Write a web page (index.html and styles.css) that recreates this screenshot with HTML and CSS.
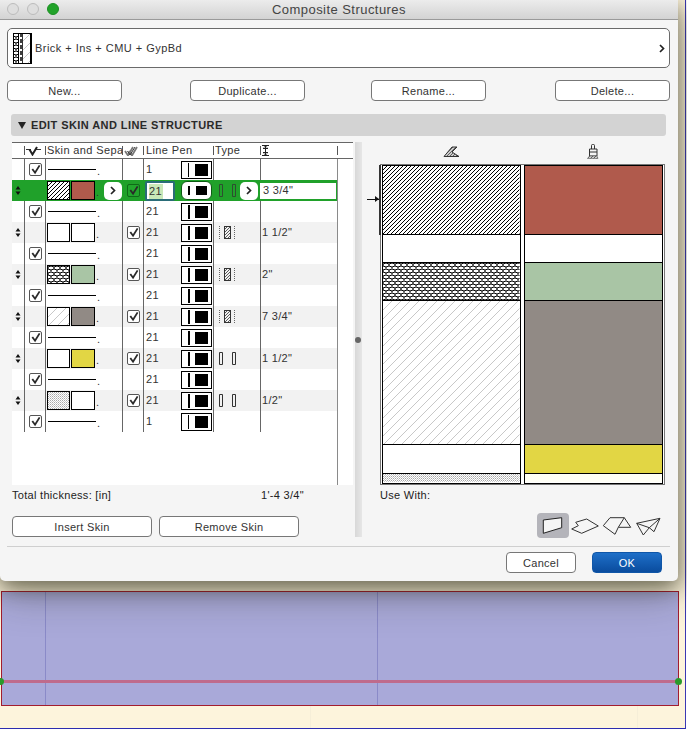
FILE: index.html
```html
<!DOCTYPE html>
<html lang="en">
<head>
<meta charset="utf-8">
<title>Composite Structures</title>
<link rel="stylesheet" href="styles.css">
</head>
<body>
<svg class="defs" aria-hidden="true">
  <defs>
    <pattern id="brick" width="4" height="4" patternUnits="userSpaceOnUse"><path d="M-1 1L1-1M0 4L4 0M3 5L5 3" stroke="#000" stroke-width="1"/></pattern>
    <pattern id="cmu" width="6" height="6" patternUnits="userSpaceOnUse"><path d="M3 0L6 1V3L3 4L0 3V1ZM3 4V6" fill="none" stroke="#000" stroke-width="1"/></pattern>
    <pattern id="conc" width="9" height="9" patternUnits="userSpaceOnUse"><path d="M-1 1L1-1M0 9L9 0M8 10L10 8" stroke="#c8c8c8" stroke-width="1"/></pattern>
    <pattern id="dots" width="2" height="2" patternUnits="userSpaceOnUse"><rect width="1" height="1" fill="#aaa"/><rect x="1" y="1" width="1" height="1" fill="#ccc"/></pattern>
    <pattern id="mini" width="3" height="3" patternUnits="userSpaceOnUse"><path d="M-1 1L1-1M0 3L3 0M2 4L4 2" stroke="#333" stroke-width=".8"/></pattern>
    <pattern id="surf" width="3" height="3" patternUnits="userSpaceOnUse"><rect width="3" height="3" fill="#ccc"/><path d="M0 3L3 0" stroke="#444" stroke-width=".8"/></pattern>
    <symbol id="check" viewBox="0 0 12 12"><path d="M2.500 5.500L5.500 9.500L10.500 1.500" fill="none" stroke="#2a2a2a" stroke-width="2"/></symbol>
    <symbol id="chev" viewBox="0 0 6 9"><path d="M1 1L4.500 4.500L1 8" fill="none" stroke="#222" stroke-width="1.700"/></symbol>
    <symbol id="sort" viewBox="0 0 6 9"><path d="M3 0L5.500 3.400H.5ZM3 9L.5 5.600H5.500Z" fill="#111"/></symbol>
    <symbol id="type-rects" viewBox="0 0 17 13"><path d="M.5.5H3.500V12.500H.5ZM13.500.5H16.500V12.500H13.500Z" fill="none" stroke="#333"/></symbol>
    <symbol id="type-core" viewBox="0 0 17 13"><rect x="5.500" y=".5" width="6" height="12" fill="url(#mini)" stroke="#333"/><path d="M.5 0V13M15.500 0V13" stroke="#666" stroke-dasharray="1 1"/></symbol>
  </defs>
</svg>

<div class="desk">
  <div class="plan">
    <i class="plan-v plan-v-a"></i>
    <i class="plan-v plan-v-b"></i>
    <i class="plan-axis"></i>
    <i class="plan-pin plan-pin-l"></i>
    <i class="plan-pin plan-pin-r"></i>
  </div>
</div>

<div class="dialog">
  <header class="titlebar">
    <span class="lights"><i class="light"></i><i class="light"></i><i class="light light-on"></i></span>
    <span class="title">Composite Structures</span>
  </header>

  <div class="picker">
    <svg class="picker-icon" viewBox="0 0 19 31">
      <rect width="19" height="31" fill="#fff"/>
      <rect width="1" height="31" fill="#000"/>
      <rect x="1" width="4" height="31" fill="url(#cmu)"/>
      <rect x="5" width="1" height="31" fill="#000"/>
      <path d="M8 0V31" stroke="#000" stroke-width="1.500" stroke-dasharray="4 2"/>
      <rect x="9" width="8" height="31" fill="url(#conc)"/>
      <rect x="9" width="1" height="31" fill="#333"/>
      <rect x="17" width="2" height="31" fill="#000"/>
      <path d="M0 .5H19M0 30.500H19" stroke="#000"/>
    </svg>
    <span class="picker-name">Brick + Ins + CMU + GypBd</span>
    <svg class="picker-chev"><use href="#chev"/></svg>
  </div>

  <div class="actions">
    <button class="btn btn-wide">New...</button>
    <button class="btn btn-wide">Duplicate...</button>
    <button class="btn btn-wide">Rename...</button>
    <button class="btn btn-wide">Delete...</button>
  </div>

  <div class="section"><i class="tri"></i>EDIT SKIN AND LINE STRUCTURE</div>

  <div class="main">
    <div class="left">
      <div class="table">
        <div class="row head">
          <span class="c"></span>
          <span class="c h-ico"><svg class="h-check" viewBox="0 0 15 10"><path d="M0 3.500H5M10 3.500H15" stroke="#333"/><path d="M3.500 3.500L6.500 8.500L11 1" fill="none" stroke="#222" stroke-width="2"/></svg></span>
          <span class="c">Skin and Sepa</span>
          <span class="c h-ico"><svg class="h-check2" viewBox="0 0 15 10"><path d="M1 5L4 9.500L9 1M5 5L8 9.500L13 1" fill="none" stroke="#777" stroke-width="1.800"/><path d="M3.500 5L6 9L11 1" fill="none" stroke="#333" stroke-width="1"/></svg></span>
          <span class="c">Line Pen</span>
          <span class="c">Type</span>
          <span class="c h-ico"><svg class="h-beam" viewBox="0 0 7 11"><path d="M0 .5H7M0 10.500H7M3.500 1V10M1 3.500H6M1 7.500H6M2 2.500L3.500 1L5 2.500M2 8.500L3.500 10L5 8.500" fill="none" stroke="#222"/></svg></span>
          <span class="c"></span>
        </div>

        <div class="rows">
        <div class="row">
          <span class="c"></span>
          <span class="c center"><span class="cb"><svg><use href="#check"/></svg></span></span>
          <span class="c line-cell"><i class="rule"></i><b class="dot">.</b></span>
          <span class="c"></span>
          <span class="c pen-cell"><span class="num">1</span><span class="pen pen-thin"><i></i><i></i></span></span>
          <span class="c"></span>
          <span class="c"></span>
        </div>

        <div class="row selected">
          <span class="c center"><svg class="sort"><use href="#sort"/></svg></span>
          <span class="c"></span>
          <span class="c skin-cell">
            <svg class="swatch"><rect width="100%" height="100%" fill="#fff"/><rect width="100%" height="100%" fill="url(#brick)"/></svg>
            <i class="swatch col-brick"></i><b class="dot">.</b>
            <span class="mini-btn mini-btn-a"><svg><use href="#chev"/></svg></span>
          </span>
          <span class="c center"><span class="cb cb-green"><svg><use href="#check"/></svg></span></span>
          <span class="c pen-cell"><span class="field"><em>21</em></span><span class="pen pen-round"><i></i><i></i></span></span>
          <span class="c type-cell"><svg class="type type-sel"><use href="#type-rects"/></svg><span class="mini-btn mini-btn-b"><svg><use href="#chev"/></svg></span></span>
          <span class="c thick-field">3 3/4"</span>
        </div>

        <div class="row">
          <span class="c"></span>
          <span class="c center"><span class="cb"><svg><use href="#check"/></svg></span></span>
          <span class="c line-cell"><i class="rule"></i><b class="dot">.</b></span>
          <span class="c"></span>
          <span class="c pen-cell"><span class="num">21</span><span class="pen"><i></i><i></i></span></span>
          <span class="c"></span>
          <span class="c"></span>
        </div>

        <div class="row skin">
          <span class="c center"><svg class="sort"><use href="#sort"/></svg></span>
          <span class="c"></span>
          <span class="c skin-cell"><i class="swatch"></i><i class="swatch"></i><b class="dot">.</b></span>
          <span class="c center"><span class="cb"><svg><use href="#check"/></svg></span></span>
          <span class="c pen-cell"><span class="num">21</span><span class="pen"><i></i><i></i></span></span>
          <span class="c type-cell"><svg class="type"><use href="#type-core"/></svg></span>
          <span class="c thick">1 1/2"</span>
        </div>

        <div class="row">
          <span class="c"></span>
          <span class="c center"><span class="cb"><svg><use href="#check"/></svg></span></span>
          <span class="c line-cell"><i class="rule"></i><b class="dot">.</b></span>
          <span class="c"></span>
          <span class="c pen-cell"><span class="num">21</span><span class="pen"><i></i><i></i></span></span>
          <span class="c"></span>
          <span class="c"></span>
        </div>

        <div class="row skin">
          <span class="c center"><svg class="sort"><use href="#sort"/></svg></span>
          <span class="c"></span>
          <span class="c skin-cell"><svg class="swatch"><rect width="100%" height="100%" fill="#fff"/><rect width="100%" height="100%" fill="url(#cmu)"/></svg><i class="swatch col-green"></i><b class="dot">.</b></span>
          <span class="c center"><span class="cb"><svg><use href="#check"/></svg></span></span>
          <span class="c pen-cell"><span class="num">21</span><span class="pen"><i></i><i></i></span></span>
          <span class="c type-cell"><svg class="type"><use href="#type-core"/></svg></span>
          <span class="c thick">2"</span>
        </div>

        <div class="row">
          <span class="c"></span>
          <span class="c center"><span class="cb"><svg><use href="#check"/></svg></span></span>
          <span class="c line-cell"><i class="rule"></i><b class="dot">.</b></span>
          <span class="c"></span>
          <span class="c pen-cell"><span class="num">21</span><span class="pen"><i></i><i></i></span></span>
          <span class="c"></span>
          <span class="c"></span>
        </div>

        <div class="row skin">
          <span class="c center"><svg class="sort"><use href="#sort"/></svg></span>
          <span class="c"></span>
          <span class="c skin-cell"><svg class="swatch"><rect width="100%" height="100%" fill="#fff"/><rect width="100%" height="100%" fill="url(#conc)"/></svg><i class="swatch col-grey"></i><b class="dot">.</b></span>
          <span class="c center"><span class="cb"><svg><use href="#check"/></svg></span></span>
          <span class="c pen-cell"><span class="num">21</span><span class="pen"><i></i><i></i></span></span>
          <span class="c type-cell"><svg class="type"><use href="#type-core"/></svg></span>
          <span class="c thick">7 3/4"</span>
        </div>

        <div class="row">
          <span class="c"></span>
          <span class="c center"><span class="cb"><svg><use href="#check"/></svg></span></span>
          <span class="c line-cell"><i class="rule"></i><b class="dot">.</b></span>
          <span class="c"></span>
          <span class="c pen-cell"><span class="num">21</span><span class="pen"><i></i><i></i></span></span>
          <span class="c"></span>
          <span class="c"></span>
        </div>

        <div class="row skin">
          <span class="c center"><svg class="sort"><use href="#sort"/></svg></span>
          <span class="c"></span>
          <span class="c skin-cell"><i class="swatch"></i><i class="swatch col-yellow"></i><b class="dot">.</b></span>
          <span class="c center"><span class="cb"><svg><use href="#check"/></svg></span></span>
          <span class="c pen-cell"><span class="num">21</span><span class="pen"><i></i><i></i></span></span>
          <span class="c type-cell"><svg class="type"><use href="#type-rects"/></svg></span>
          <span class="c thick">1 1/2"</span>
        </div>

        <div class="row">
          <span class="c"></span>
          <span class="c center"><span class="cb"><svg><use href="#check"/></svg></span></span>
          <span class="c line-cell"><i class="rule"></i><b class="dot">.</b></span>
          <span class="c"></span>
          <span class="c pen-cell"><span class="num">21</span><span class="pen"><i></i><i></i></span></span>
          <span class="c"></span>
          <span class="c"></span>
        </div>

        <div class="row skin">
          <span class="c center"><svg class="sort"><use href="#sort"/></svg></span>
          <span class="c"></span>
          <span class="c skin-cell"><svg class="swatch"><rect width="100%" height="100%" fill="#fff"/><rect width="100%" height="100%" fill="url(#dots)"/></svg><i class="swatch"></i><b class="dot">.</b></span>
          <span class="c center"><span class="cb"><svg><use href="#check"/></svg></span></span>
          <span class="c pen-cell"><span class="num">21</span><span class="pen"><i></i><i></i></span></span>
          <span class="c type-cell"><svg class="type"><use href="#type-rects"/></svg></span>
          <span class="c thick">1/2"</span>
        </div>

        <div class="row">
          <span class="c"></span>
          <span class="c center"><span class="cb"><svg><use href="#check"/></svg></span></span>
          <span class="c line-cell"><i class="rule"></i><b class="dot">.</b></span>
          <span class="c"></span>
          <span class="c pen-cell"><span class="num">1</span><span class="pen pen-thin"><i></i><i></i></span></span>
          <span class="c"></span>
          <span class="c"></span>
        </div>
        </div>
      </div>

      <div class="total"><span class="total-label">Total thickness: [in]</span><span>1'-4 3/4"</span></div>

      <div class="skin-actions">
        <button class="btn btn-skin">Insert Skin</button>
        <button class="btn btn-skin">Remove Skin</button>
      </div>
    </div>

    <div class="splitter"><i class="splitter-dot"></i></div>

    <div class="right">
      <div class="preview-head">
        <svg class="ico-surface" viewBox="0 0 18 12"><path d="M2 10.500L10 1H15L10 6L17 10.500Z" fill="url(#surf)" stroke="#333"/></svg>
        <svg class="ico-brush" viewBox="0 0 12 15"><path d="M4.500 5V1.500Q4.500 .5 5.500 .5H6.500Q7.500 .5 7.500 1.500V5M2.500 5H10V12H2.500Z" fill="#f5f5f5" stroke="#333"/><path d="M2.500 8H10" stroke="#333"/><path d="M2.500 12H10L11 14.500H.5Z" fill="url(#surf)" stroke="#555" stroke-width=".6"/></svg>
      </div>
      <div class="preview">
        <div class="pcol">
          <span class="pc pc-1"><svg class="pfill"><rect width="100%" height="100%" fill="url(#brick)"/></svg></span>
          <i class="pc pc-2"></i>
          <span class="pc pc-3"><svg class="pfill"><rect width="100%" height="100%" fill="url(#cmu)"/></svg></span>
          <span class="pc pc-4"><svg class="pfill"><rect width="100%" height="100%" fill="url(#conc)"/></svg></span>
          <i class="pc pc-5"></i>
          <span class="pc pc-6"><svg class="pfill"><rect width="100%" height="100%" fill="url(#dots)"/></svg></span>
        </div>
        <div class="pcol">
          <i class="pc pc-1 col-brick"></i>
          <i class="pc pc-2"></i>
          <i class="pc pc-3 col-green"></i>
          <i class="pc pc-4 col-grey"></i>
          <i class="pc pc-5 col-yellow"></i>
          <i class="pc pc-6 col-ivory"></i>
        </div>
        <span class="marker"><i class="marker-arrow"></i></span>
      </div>
      <div class="use-with">Use With:</div>
      <div class="geom">
        <span class="geom-item geom-on"><svg viewBox="0 0 32 25"><path d="M6.300 7L24.700 4.700V14.700L6.300 20.300Z" fill="#f5f5f5" stroke="#222"/></svg></span>
        <span class="geom-item"><svg viewBox="0 0 32 25"><path d="M2.700 16L9.300 12.700L6.700 9.300L17.700 6L29.300 13L12.700 20.300Z" fill="none" stroke="#333"/></svg></span>
        <span class="geom-item"><svg viewBox="0 0 32 25"><path d="M2.300 12.700L9 4.700H23.300L29.700 14.300H17.300L14 21.300ZM23.300 4.700L17.300 14.300" fill="none" stroke="#333"/></svg></span>
        <span class="geom-item"><svg viewBox="0 0 32 25"><path d="M3.700 10.300L27 5.300L21 18.700L16.300 14.700L10.300 22ZM27 5.300L16.300 14.700L3.700 10.300" fill="none" stroke="#333"/></svg></span>
      </div>
    </div>
  </div>

  <div class="divider"></div>

  <div class="footer">
    <button class="btn btn-foot">Cancel</button>
    <button class="btn btn-foot btn-ok">OK</button>
  </div>
</div>
</body>
</html>
```

FILE: styles.css
```css
* { box-sizing: border-box; }
html, body { margin: 0; padding: 0; }
body {
  position: relative;
  width: 687px;
  height: 729px;
  overflow: hidden;
  font-family: "Liberation Sans", Arial, sans-serif;
  font-size: 11px;
  letter-spacing: .3px;
  color: #333;
}
.defs { position: absolute; width: 0; height: 0; }
i, em, b { display: block; font-style: normal; font-weight: normal; }
button { font: inherit; letter-spacing: inherit; margin: 0; }

/* drawing behind the dialog */
.desk {
  width: 686px;
  height: 729px;
  padding: 591px 0 0 1px;
  background:
    linear-gradient(#f6eed8, #f6eed8) 310px 706px / 1px 23px no-repeat,
    linear-gradient(#f6eed8, #f6eed8) 637px 706px / 1px 23px no-repeat,
    #fdf4dc;
  border-right: 1px solid #3b38b4;
  border-bottom: 1px solid #2c2cb0;
}
.plan {
  position: relative;
  width: 678px;
  height: 115px;
  background: #a9a9d9;
  border: 1px solid #a31c2e;
}
.plan-v { position: absolute; top: 0; bottom: 0; width: 1px; background: #8a8ac8; }
.plan-v-a { left: 43px; }
.plan-v-b { left: 375px; }
.plan-axis { position: absolute; left: 0; right: 0; top: 88px; height: 3px; background: #bf6b8c; }
.plan-pin { position: absolute; top: 86px; width: 7px; height: 7px; border-radius: 50%; background: #2a9a2a; }
.plan-pin-l { left: -5px; }
.plan-pin-r { right: -4px; }

/* dialog */
.dialog {
  position: absolute;
  top: 0;
  left: 0;
  width: 678px;
  height: 581px;
  background: #f5f5f5;
  border-radius: 0 0 5px 5px;
  box-shadow: 0 6px 20px rgba(30, 30, 10, .55), 0 14px 40px rgba(30, 30, 10, .3);
}
.titlebar {
  display: flex;
  align-items: center;
  justify-content: center;
  position: relative;
  height: 20px;
  background: linear-gradient(#ececec, #d3d3d3);
  border-bottom: 1px solid #9a9a9a;
}
.title { font-size: 13px; letter-spacing: .45px; color: #444; }
.lights { position: absolute; left: 7px; top: 3px; display: flex; gap: 8px; }
.light { width: 12px; height: 12px; border-radius: 50%; background: #dedede; border: 1px solid #bcbcbc; }
.light-on { background: #22a32a; border-color: #1c9024; }

.picker {
  display: flex;
  align-items: center;
  margin: 8px 0 0 7px;
  width: 663px;
  height: 40px;
  padding: 0 5px;
  background: #fff;
  border: 1px solid #6a6a6a;
  border-radius: 5px;
}
.picker-icon { width: 19px; height: 31px; flex: none; }
.picker-name { margin-left: 3px; flex: 1; letter-spacing: .47px; }
.picker-chev { width: 6px; height: 9px; margin-right: -1px; }

.actions { display: flex; gap: 68px; margin: 12px 0 0 7px; }
.btn {
  height: 21px;
  padding: 0;
  background: #fff;
  color: #333;
  border: 1px solid #777;
  border-radius: 4px;
  text-align: center;
}
.btn-wide { width: 115px; flex: none; }
.btn-wide:nth-child(3) { margin-left: -2px; }
.btn-wide:nth-child(4) { margin-left: 1px; }
.btn-skin { width: 140px; }
.btn-foot { width: 70px; }
.btn-ok {
  background: linear-gradient(#1e6fc8, #0a4c9e);
  border-color: #0f56a8;
  color: #fff;
}

.section {
  display: flex;
  align-items: center;
  margin: 13px 0 0 11px;
  width: 655px;
  height: 22px;
  padding-left: 7px;
  background: #d3d3d3;
  border-radius: 3px;
  font-weight: bold;
  letter-spacing: .42px;
  color: #2a2a2a;
}
.tri {
  width: 0;
  height: 0;
  margin-right: 5px;
  border-left: 4px solid transparent;
  border-right: 4px solid transparent;
  border-top: 7px solid #222;
}

.main { display: flex; margin: 6px 0 0 12px; height: 395px; }
.left { width: 343px; flex: none; }

.table { width: 341px; height: 343px; background: #fff; }
.rows { width: 326px; height: 326px; border-right: 1px solid #8a8a8a; }
.row {
  display: grid;
  grid-template-columns: 12px 21px 77px 21px 70px 47px 77px;
  height: 21px;
  line-height: 21px;
}
.c { display: flex; align-items: center; min-width: 0; white-space: nowrap; border-left: 1px solid #666; }
.c:first-child { border-left: 0; }
.center { justify-content: center; }
.skin { background: #f2f2f2; }

.head {
  grid-template-columns: 12px 21px 77px 21px 70px 47px 77px 16px;
  height: 17px;
  line-height: 15px;
  border-top: 1px solid #666;
  border-bottom: 1px solid #666;
  background: #fff;
}
.head .c {
  border-left: 0;
  padding-left: 2px;
  overflow: hidden;
  background: linear-gradient(#555, #555) left center / 1px 9px no-repeat;
  letter-spacing: .38px;
}
.head .c:first-child { background: none; }
.head .c:nth-child(5) { padding-left: 3px; }
.h-ico { padding-left: 3px; }
.h-check { width: 15px; height: 10px; flex: none; }
.h-check2 { width: 15px; height: 10px; flex: none; }
.h-beam { width: 7px; height: 11px; flex: none; }

.cb {
  display: block;
  width: 13px;
  height: 13px;
  background: #fff;
  border: 1px solid #555;
  border-radius: 2px;
}
.cb svg { display: block; width: 11px; height: 11px; }
.cb-green { background: #22a62c; border-color: #0f6a18; }

.sort { width: 6px; height: 9px; flex: none; }

.line-cell { padding-left: 2px; }
.rule { width: 48px; height: 1px; background: #000; }
.dot { width: 5px; margin-left: 1px; padding-top: 3px; line-height: 12px; }

.skin-cell { padding-left: 1px; gap: 1px; }
.skin-cell .dot { margin-left: 0; }
.swatch {
  display: block;
  flex: none;
  width: 24px;
  height: 19px;
  background: #fff;
  border: 1px solid #000;
}
.swatch:first-child { width: 23px; }
.col-brick { background: #b05a4c; }
.col-green { background: #a9c5a5; }
.col-grey { background: #918a85; }
.col-yellow { background: #e2d644; }
.col-ivory { background: #fffff6; }

.mini-btn {
  display: flex;
  align-items: center;
  justify-content: center;
  flex: none;
  width: 18px;
  height: 18px;
  background: #fff;
  border-radius: 5px;
}
.mini-btn svg { width: 6px; height: 9px; }
.mini-btn-a { margin-left: 4px; }
.mini-btn-b { margin-left: 4px; }

.pen-cell { padding-left: 2px; justify-content: space-between; }
.pen {
  display: flex;
  align-items: center;
  justify-content: space-between;
  flex: none;
  width: 31px;
  height: 18px;
  margin-right: 1px;
  padding: 0 3px 0 6px;
  background: #fff;
  border: 1px solid #000;
}
.pen i:first-child { width: 2px; height: 14px; background: #000; }
.pen i:last-child { width: 13px; height: 12px; background: #000; }
.pen-thin i:first-child { width: 1px; }
.pen-round { height: 19px; border-radius: 6px; border-color: #0b5c12; }
.pen-round i:first-child { height: 9px; }
.pen-round i:last-child { height: 9px; width: 11px; margin-right: 1px; }

.field {
  display: block;
  flex: none;
  width: 30px;
  height: 20px;
  padding: 1px 0 0 2px;
  margin-left: -1px;
  background: #fff;
  border: 2px solid #2a6c78;
  border-radius: 2px;
  line-height: 15px;
}
.field em { display: inline-block; padding-right: 1px; background: #c9e8b8; }

.type-cell { padding-left: 5px; }
.type { display: block; width: 17px; height: 13px; flex: none; }
.type-sel { opacity: .75; }
.thick { padding-left: 1px; }
.thick-field {
  height: 16px;
  align-self: center;
  padding-left: 3px;
  background: #fff;
  border-left: 0;
}

.selected { background: #20a12a; }
.selected .c { border-left-color: transparent; }
.selected .thick-field { margin-right: 1px; border-left: 0; }

.total { display: flex; margin-top: 4px; height: 13px; line-height: 13px; color: #222; }
.total-label { width: 249px; }

.skin-actions { display: flex; gap: 7px; margin-top: 14px; }

.splitter {
  position: relative;
  margin-right: 18px;
  width: 7px;
  flex: none;
  height: 395px;
  background: linear-gradient(90deg, #d8d8d8, #e6e6e6);
}
.splitter-dot {
  position: absolute;
  left: 0;
  top: 195px;
  width: 6px;
  height: 6px;
  border-radius: 50%;
  background: #666;
}

.right { width: 285px; flex: none; }
.preview-head {
  display: grid;
  grid-template-columns: 142px 142px;
  justify-items: center;
  align-items: center;
  height: 22px;
  padding: 2px 0 6px;
}
.ico-surface { width: 18px; height: 12px; }
.ico-brush { width: 12px; height: 15px; }

.preview {
  position: relative;
  display: flex;
  gap: 3px;
  width: 285px;
  height: 321px;
  padding: 0 1px;
  background: #fff;
  border: 1px solid #777;
}
.pcol {
  display: flex;
  flex-direction: column;
  width: 139px;
  height: 319px;
  border: 1px solid #000;
}
.pcol + .pcol { width: 140px; }
.pc { display: block; flex: none; width: 100%; overflow: hidden; border-bottom: 1px solid #000; }
.pfill { display: block; width: 100%; height: 100%; }
.pc-1 { height: 69px; }
.pc-2 { height: 28px; }
.pc-3 { height: 38px; }
.pc-4 { height: 144px; }
.pc-5 { height: 29px; }
.pc-6 { height: 8px; border-bottom: 0; }

.marker {
  position: absolute;
  left: -2px;
  top: 0;
  width: 2px;
  height: 70px;
  background: #333;
}
.marker-arrow {
  position: absolute;
  right: 2px;
  top: 34px;
  width: 12px;
  height: 1px;
  background: #111;
}
.marker-arrow::after {
  content: "";
  position: absolute;
  right: 0;
  top: -3px;
  border-left: 4px solid #111;
  border-top: 3px solid transparent;
  border-bottom: 3px solid transparent;
}

.use-with { margin-top: 4px; height: 13px; line-height: 13px; color: #222; }
.geom { display: flex; justify-content: flex-end; margin-top: 11px; }
.geom-item { display: block; width: 32px; height: 25px; flex: none; border-radius: 4px; }
.geom-item svg { display: block; width: 32px; height: 25px; }
.geom-on { background: #b4b4ba; }

.divider { margin: 9px 0 0 7px; width: 663px; height: 1px; background: #cfcfcf; }
.footer { display: flex; justify-content: flex-end; gap: 16px; margin: 5px 16px 0 0; }
```
